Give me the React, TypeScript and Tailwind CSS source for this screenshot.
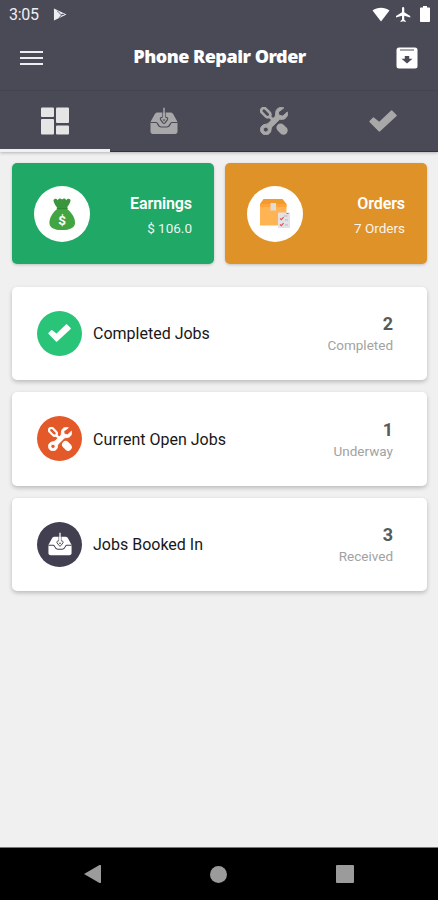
import React from 'react';

function ToolsIcon({ className }: { className: string }) {
  return (
    <svg viewBox="0 0 28 28" fill="none" className={className}>
      {/* Screwdriver */}
      <g stroke="currentColor" strokeLinecap="round">
        <rect x="0.5" y="2.9" width="10.6" height="5.4" rx="2.7" transform="rotate(45 5.8 5.5)" strokeWidth="2.6" />
        <path d="M10 10l3 3" strokeWidth="3" />
        <path d="M20.600 20.600l2.900 2.900" strokeWidth="8.400" />
      </g>
      {/* Wrench */}
      <path
        fill="currentColor"
        stroke="currentColor"
        strokeWidth="1"
        fillRule="evenodd"
        d="M23.8.9c-3.3-1.2-7 .1-7.9 3.4-.4 1.4-.2 2.9-.3 3.8-.1.8-.4 1.2-1 1.8l-6.3 6.3c-.7.7-1.4.9-2.500 1C2.700 17.400.500 19.700.500 22.500a5.300 5.300 0 0 0 10.600.1c0-1.400.2-2 1-2.800l6.800-6.800c.7-.7 1.200-.7 2.200-.6 4.200.4 7.400-3.200 6.200-7.400l-4.500 4.100-3.800-.8-.7-3.200zM5.800 20.100a2.500 2.500 0 1 1 0 5 2.500 2.500 0 0 1 0-5z"
      />
    </svg>
  );
}

function InboxIcon({ className, line }: { className: string; line: string }) {
  return (
    <svg viewBox="0 0 28 28" fill="none" className={className}>
      <path d="M8 5.500h12c1.800 0 2.600.6 3.300 1.800l3.300 6c.5.900.9 1.600.9 2.700v8.600c0 1.600-.9 2.400-2.400 2.400H2.900C1.400 27 .5 26.200.5 24.600V16c0-1.100.4-1.800.9-2.700l3.300-6C5.400 6.100 6.200 5.500 8 5.500z" fill="currentColor" />
      <path d="M.5 15.500h5.700c.7 0 1 .4 1.400 1.300.8 1.900 1.700 3.200 3.700 3.200h5.400c2 0 2.900-1.300 3.700-3.200.4-.9.700-1.300 1.400-1.300h5.700" stroke={line} strokeWidth="1.200" />
      <path d="M12.700 5v5.300M15.300 5v5.300" stroke={line} strokeWidth="0.800" />
      <path d="M12.500 10.300c-2 .2-2.600 1.200-2 2.300l2.500 3.300c.6.700 1.400.7 2 0l2.500-3.300c.6-1.100 0-2.100-2-2.300" stroke={line} strokeWidth="1.100" />
      <path d="M14 .8v13" stroke="currentColor" strokeWidth="1.500" />
      <path d="M12.500 12.500h3L14 14.300z" fill={line} />
    </svg>
  );
}

function CheckIcon({ className }: { className: string }) {
  return (
    <svg viewBox="0 0 28 22" className={className}>
      <path
        d="M1.500 11.500l3-3 5.700 4.700L22.600 1.500l4 4-16.200 15z"
        fill="currentColor"
        stroke="currentColor"
        strokeWidth="2.200"
        strokeLinejoin="round"
      />
    </svg>
  );
}

function MoneyBag() {
  return (
    <svg viewBox="0 0 28 34" className="h-[34px] w-[27px]">
      <path d="M5 2c1.500-1.300 3-.7 3.900.7C10.300.3 12 .3 13.500 2c1.500-1.700 3.300-1.700 4.600.7C19 1.300 20.600.7 22 2c1 1.100-.5 4.500-3.500 8.500h-10C5.500 6.500 4 3.100 5 2z" fill="#3a963d" />
      <path d="M8.800 11.500h9.600C23 15 27 20.500 27 26c0 5-5.200 7.700-13.500 7.700S.4 31 .4 26c0-5.500 3.900-11 8.400-14.500z" fill="#43a541" />
      <path d="M9 11h9.500" stroke="#2f8a36" strokeWidth="2" strokeLinecap="round" />
      <text x="13.500" y="28" textAnchor="middle" fill="#fff" fontSize="14" fontWeight="700" fontFamily="Roboto, sans-serif">$</text>
    </svg>
  );
}

function OrderBox() {
  return (
    <svg viewBox="0 0 32 32" className="h-8 w-8">
      <path d="M4.500 1h19l4 5H1z" fill="#f39a2d" />
      <path d="M1 6h26.500v21.500H1z" fill="#ffb454" />
      <path d="M1 6h26.500v3H1z" fill="#ffa33a" />
      <path d="M11.500 5h5.500v7.500h-5.500z" fill="#e0ddd9" />
      <rect x="19" y="14.500" width="12" height="15.500" rx="0.800" fill="#e3e2e5" />
      <path d="M25 18h3.500M26 22h3M26 27h3" stroke="#b8b7bf" strokeWidth="1" />
      <path d="M21 20.500l1.300 1.200 2.300-2.500M21 26.500l1.300 1.200 2.300-2.500M27.500 15.500h2" fill="none" stroke="#e65352" strokeWidth="1.200" />
    </svg>
  );
}

function StatusBar() {
  return (
    <div className="flex h-7 items-center px-[9px] text-[#eeeef2]">
      <span className="w-11 pt-px text-[16px] tracking-[-0.3px]">3:05</span>
      <svg viewBox="0 0 14 14" className="h-[13px] w-[14px]">
        <path d="M.5.5L14 7 .5 13.500z" fill="currentColor" />
        <path d="M4 3l5 5M6 10.500l4-4.500M8.500 7h3" stroke="#4a4956" strokeWidth="0.900" />
      </svg>
      <svg viewBox="0 0 18 15" className="ml-auto h-[15px] w-[18px] text-white">
        <path d="M.5 3.500C5.500-.3 12.500-.3 17.500 3.500L9 14.500z" fill="currentColor" />
      </svg>
      <svg viewBox="2 2 20 20" className="ml-[6px] h-[15px] w-[15px] text-white">
        <path d="M21 16v-2l-8-5V3.500a1.500 1.500 0 0 0-3 0V9l-8 5v2l8-2.500V19l-2 1.500V22l3.500-1 3.500 1v-1.500L13 19v-5.500z" fill="currentColor" />
      </svg>
      <svg viewBox="0 0 10 16" className="mr-[-1px] ml-[9px] h-4 w-[10px] text-white">
        <path d="M3 0h4v1.500h2c.6 0 1 .4 1 1V15c0 .6-.4 1-1 1H1c-.6 0-1-.4-1-1V2.500c0-.6.4-1 1-1h2z" fill="currentColor" />
      </svg>
    </div>
  );
}

function SummaryCard({ icon, title, value, color }: { icon: React.ReactNode; title: string; value: string; color: string }) {
  return (
    <div className={`flex h-[101px] flex-1 items-center rounded-[5px] pr-[22px] pl-[22px] shadow-[0_1px_3px_rgba(0,0,0,0.2)] ${color}`}>
      <div className="flex h-14 w-14 items-center justify-center rounded-full bg-white">{icon}</div>
      <div className="ml-auto pt-[4px] text-right text-white">
        <p className="text-[16px] leading-[25px] font-semibold tracking-[-0.1px]">{title}</p>
        <p className="text-[13.500px] leading-[25px] opacity-90">{value}</p>
      </div>
    </div>
  );
}

function JobCard({ icon, iconBg, title, count, status }: { icon: React.ReactNode; iconBg: string; title: string; count: number; status: string }) {
  return (
    <div className="flex h-[93.500px] items-center rounded-[5px] bg-white pr-[34px] pl-[25px] shadow-[0_2px_4px_rgba(0,0,0,0.22)]">
      <div className={`flex h-[45px] w-[45px] items-center justify-center rounded-full text-white ${iconBg}`}>{icon}</div>
      <p className="ml-[11px] pt-[2px] text-[16px] text-[#171717]">{title}</p>
      <div className="ml-auto pt-[2px] text-right">
        <p className="text-[18px] leading-[22px] font-bold text-[#595959]">{count}</p>
        <p className="text-[13.500px] leading-5 text-[#a2a2a2]">{status}</p>
      </div>
    </div>
  );
}

export default function App() {
  return (
    <div className="flex h-[900px] w-[438px] flex-col overflow-hidden bg-[#f0f0f0] font-['Roboto',sans-serif]">
      <header className="h-[152px] shrink-0 border-b border-[#353342] bg-[#4a4956] shadow-[0_1px_3px_rgba(0,0,0,0.25)]">
        <StatusBar />
        <div className="flex h-[62px] items-center justify-between pr-5 pb-[2px] pl-5 text-white">
          <div className="flex w-[23px] flex-col gap-[4px]">
            <span className="h-[2px] bg-[#ececf1]" />
            <span className="h-[2px] bg-[#ececf1]" />
            <span className="h-[2px] bg-[#ececf1]" />
          </div>
          <h1 className="pb-[4px] font-['Noto_Sans',sans-serif] text-[18px] font-black tracking-[-0.500px] whitespace-nowrap">Phone Repair Order</h1>
          <svg viewBox="0 0 22 22" className="h-[22px] w-[22px]">
            <rect x="0.500" y="0.500" width="21" height="21" rx="2.500" fill="currentColor" />
            <path d="M4 3h14" stroke="#777684" strokeWidth="1.300" />
            <path d="M11 16.500l-5.500-4.800h3.300V9h4.400v2.700h3.300z" fill="#4a4956" />
          </svg>
        </div>
        <nav className="grid h-[62px] grid-cols-4 border-t border-[#454350] text-[#a8a8a8]">
          <div className="flex items-center justify-center border-b-[3px] border-[#f0f0f0] pt-px">
            <svg viewBox="0 0 28 28" className="h-7 w-7 text-[#e5e5e5]">
              <g fill="currentColor">
                <rect x="0" y="0.500" width="13" height="9.500" rx="1" />
                <rect x="0" y="12" width="13" height="15.500" rx="1" />
                <rect x="15" y="0.500" width="13" height="15.500" rx="1" />
                <rect x="15" y="18.500" width="13" height="9" rx="1" />
              </g>
            </svg>
          </div>
          <div className="flex items-center justify-center pb-[2px]">
            <InboxIcon className="h-7 w-7" line="#4a4956" />
          </div>
          <div className="flex items-center justify-center pb-[2px]">
            <ToolsIcon className="h-7 w-7" />
          </div>
          <div className="flex items-center justify-center pb-px">
            <CheckIcon className="h-[22px] w-7" />
          </div>
        </nav>
      </header>

      <main className="flex-1 pt-[11px] pr-[11px] pl-3">
        <div className="flex gap-[11px]">
          <SummaryCard icon={<MoneyBag />} title="Earnings" value="$ 106.0" color="bg-[#20a867]" />
          <SummaryCard icon={<OrderBox />} title="Orders" value="7 Orders" color="bg-[#df9228]" />
        </div>
        <div className="mt-[22.500px] flex flex-col gap-3">
          <JobCard icon={<CheckIcon className="h-[18px] w-[23px]" />} iconBg="bg-[#29c478]" title="Completed Jobs" count={2} status="Completed" />
          <JobCard icon={<ToolsIcon className="h-6 w-6" />} iconBg="bg-[#e35929]" title="Current Open Jobs" count={1} status="Underway" />
          <JobCard icon={<InboxIcon className="h-6 w-6" line="#413f50" />} iconBg="bg-[#413f50]" title="Jobs Booked In" count={3} status="Received" />
        </div>
      </main>

      <footer className="flex h-[53px] shrink-0 items-center justify-between border-t border-[#777] bg-black pr-[84px] pl-[84px] text-[#9b9b9b]">
        <svg viewBox="0 0 17 18" className="h-[18px] w-[17px]">
          <path d="M0 9L15.500 0c.8-.4 1.500 0 1.500.8v16.400c0 .8-.7 1.200-1.500.8z" fill="currentColor" />
        </svg>
        <div className="h-[17px] w-[17px] rounded-full bg-[#9b9b9b]" />
        <div className="h-[18px] w-[18px] rounded-[1px] bg-[#9b9b9b]" />
      </footer>
    </div>
  );
}
